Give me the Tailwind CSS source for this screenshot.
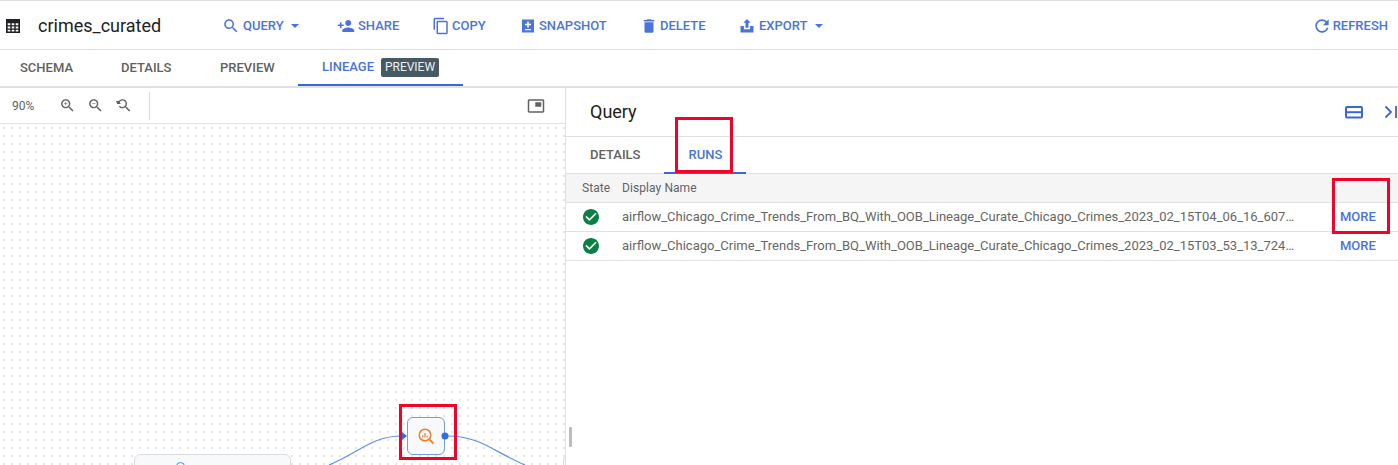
<!DOCTYPE html>
<html lang="en">
<head>
    <meta charset="UTF-8">
    <title>crimes_curated</title>
    <script src="https://cdn.jsdelivr.net/npm/@tailwindcss/browser@4"></script>
</head>
<body class="w-[1398px] h-[465px] overflow-hidden bg-white font-['Roboto',sans-serif] relative">
    <!-- title bar -->
    <div class="h-[50px] border-t border-b border-[#e0e0e0] pt-px flex items-center text-[13px] font-medium text-[#4a74dc] box-border">
        <svg class="w-[18px] h-[18px] ml-[4px] text-[#202124]" viewBox="0 0 18 18" fill="currentColor"><path fill-rule="evenodd" d="M2 2h14v14H2zM3.700 6.200v2h2.600v-2zm4 0v2h2.600v-2zm4 0v2h2.600v-2zM3.700 9.500v2h2.600v-2zm4 0v2h2.600v-2zm4 0v2h2.600v-2zM3.700 12.800v1.700h2.600v-1.700zm4 0v1.700h2.600v-1.700zm4 0v1.700h2.600v-1.700z"/></svg>
        <span class="ml-[16px] w-[184px] text-[18px] font-normal text-[#202124]">crimes_curated</span>
        <svg class="w-[18px] h-[18px] mr-[3px]" viewBox="0 0 24 24" fill="currentColor"><path d="M15.5 14h-.79l-.28-.27C15.41 12.59 16 11.11 16 9.5 16 5.91 13.09 3 9.5 3S3 5.91 3 9.5 5.91 16 9.5 16c1.61 0 3.09-.59 4.23-1.57l.27.28v.79l5 4.99L20.49 19l-4.99-5zm-6 0C7.01 14 5 11.99 5 9.5S7.01 5 9.5 5 14 7.01 14 9.500 11.990 14 9.500 14z"/></svg>
        <span class="w-[46px]">QUERY</span>
        <span class="ml-[2px] w-0 h-0 border-x-[4px] border-x-transparent border-t-[4px] border-t-[#4a74dc]"></span>
        <svg class="w-[20px] h-[18px] ml-[37px] mr-[2px]" viewBox="0 0 24 24" fill="currentColor"><path d="M15 12c2.210 0 4-1.790 4-4s-1.790-4-4-4-4 1.790-4 4 1.790 4 4 4zm-9-2V7H4v3H1v2h3v3h2v-3h3v-2H6zm9 4c-2.670 0-8 1.340-8 4v2h16v-2c0-2.660-5.330-4-8-4z"/></svg>
        <span class="w-[40px]">SHARE</span>
        <svg class="w-[18px] h-[18px] ml-[34px] mr-[2px]" viewBox="0 0 24 24" fill="currentColor"><path d="M16 1H4c-1.100 0-2 .9-2 2v14h2V3h12V1zm3 4H8c-1.100 0-2 .9-2 2v14c0 1.100.9 2 2 2h11c1.100 0 2-.9 2-2V7c0-1.100-.9-2-2-2zm0 16H8V7h11v14z"/></svg>
        <span class="w-[34px]">COPY</span>
        <svg class="w-[16px] h-[16px] ml-[34px] mr-[3px]" viewBox="0 0 16 16" fill="currentColor"><path fill-rule="evenodd" d="M2 1.500h12v13H2zM7.200 3.500v2.200H5v1.500h2.200v2.200h1.600V7.200H11V5.700H8.800V3.500zM5 11v1.300h6V11z"/></svg>
        <span class="w-[67px]">SNAPSHOT</span>
        <svg class="w-[18px] h-[18px] ml-[34px] mr-[2px]" viewBox="0 0 24 24" fill="currentColor"><path d="M6 19c0 1.100.9 2 2 2h8c1.100 0 2-.9 2-2V7H6v12zM19 4h-3.500l-1-1h-5l-1 1H5v2h14V4z"/></svg>
        <span class="w-[45px]">DELETE</span>
        <svg class="w-[16px] h-[16px] ml-[34px] mr-[4px]" viewBox="0 0 16 16" fill="currentColor"><path d="M8 1 4.300 4.800h2.200v5h3v-5h2.200zM1.500 8h3.400v3.300h6.200V8h3.400v6.500h-13z"/></svg>
        <span class="w-[47px]">EXPORT</span>
        <span class="ml-[9px] w-0 h-0 border-x-[4px] border-x-transparent border-t-[4px] border-t-[#4a74dc]"></span>
        <svg class="w-[20px] h-[20px] ml-auto mr-[1px]" viewBox="0 0 24 24" fill="currentColor"><path d="M17.650 6.350C16.200 4.900 14.210 4 12 4c-4.420 0-7.990 3.580-7.990 8s3.570 8 7.990 8c3.730 0 6.840-2.550 7.730-6h-2.080c-.82 2.330-3.040 4-5.650 4-3.310 0-6-2.690-6-6s2.690-6 6-6c1.660 0 3.140.69 4.220 1.780L13 11h7V4l-2.350 2.350z"/></svg>
        <span class="mr-[10px]">REFRESH</span>
    </div>

    <!-- tabs -->
    <div class="h-[38px] border-b-2 border-[#e0e0e0] flex text-[13px] font-medium text-[#616161] box-border">
        <div class="ml-[20px] w-[101px] flex items-center h-[36px]">SCHEMA</div>
        <div class="w-[99px] flex items-center h-[36px]">DETAILS</div>
        <div class="w-[78px] flex items-center h-[36px]">PREVIEW</div>
        <div class="px-[24px] flex items-center h-[36px] border-b-2 border-[#3b67d6] text-[#4a74dc]">
            <span class="w-[52px]">LINEAGE</span>
            <span class="ml-[7px] w-[58px] h-[19px] rounded-[2px] bg-[#455a64] text-white/90 text-[12px] font-normal flex items-center justify-center">PREVIEW</span>
        </div>
    </div>

    <div class="flex h-[377px]">
        <!-- lineage graph -->
        <div class="w-[566px] shrink-0 border-r border-[#e0e0e0] flex flex-col">
            <div class="h-[36px] shrink-0 border-b border-[#e0e0e0] flex items-center text-[#616161] box-border">
                <span class="ml-[12px] w-[47px] text-[12px]">90%</span>
                <svg class="w-[17px] h-[17px]" viewBox="0 0 24 24" fill="currentColor"><path d="M15.500 14h-.79l-.28-.27C15.410 12.590 16 11.110 16 9.500 16 5.910 13.090 3 9.500 3S3 5.910 3 9.500 5.910 16 9.500 16c1.610 0 3.090-.59 4.230-1.570l.27.28v.79l5 4.990L20.490 19l-4.990-5zm-6 0C7.010 14 5 11.990 5 9.500S7.010 5 9.500 5 14 7.010 14 9.500 11.990 14 9.500 14zM12 10h-2v2H9v-2H7V9h2V7h1v2h2v1z"/></svg>
                <svg class="w-[17px] h-[17px] ml-[11px]" viewBox="0 0 24 24" fill="currentColor"><path d="M15.500 14h-.79l-.28-.27C15.410 12.590 16 11.110 16 9.500 16 5.910 13.090 3 9.500 3S3 5.910 3 9.500 5.910 16 9.500 16c1.610 0 3.090-.59 4.230-1.570l.27.28v.79l5 4.990L20.490 19l-4.990-5zm-6 0C7.010 14 5 11.990 5 9.500S7.010 5 9.500 5 14 7.010 14 9.500 11.990 14 9.500 14zM7 9h5v1H7z"/></svg>
                <svg class="w-[17px] h-[17px] ml-[11px]" viewBox="0 0 24 24" fill="currentColor"><path d="M16.500 14h-.79l-.28-.27C16.410 12.590 17 11.110 17 9.500 17 5.910 14.090 3 10.500 3 8.300 3 6.400 4.100 5.200 5.700L1.500 5.500l1.500 4.500h5L6.700 7.200C7.500 5.900 8.900 5 10.500 5 12.990 5 15 7.010 15 9.500S12.990 14 10.500 14c-1.500 0-2.800-.7-3.600-1.800l-1.500 1.100C6.600 15 8.400 16 10.500 16c1.610 0 3.090-.59 4.230-1.570l.27.28v.79l5 4.990L21.490 19l-4.990-5z"/></svg>
                <div class="ml-[17px] w-px h-[28px] bg-[#dadce0]"></div>
                <svg class="w-[18px] h-[18px] ml-auto mr-[20px]" viewBox="0 0 24 24" fill="currentColor"><path d="M19 7h-8v6h8V7zm2-4H3c-1.100 0-2 .9-2 2v14c0 1.100.9 1.980 2 1.980h18c1.100 0 2-.88 2-1.980V5c0-1.100-.9-2-2-2zm0 16.010H3V4.980h18v14.030z"/></svg>
            </div>
            <div class="relative flex-1 overflow-hidden bg-[radial-gradient(#e6e6e6_0.8px,transparent_1px)] bg-[length:8px_8px]">
                <div class="absolute left-[407px] top-[293px] w-[38px] h-[38px] rounded-[6px] border border-[#6f9be8] bg-[#f8f9fa] flex items-center justify-center">
                    <svg class="w-[18px] h-[18px]" viewBox="0 0 18 18" fill="none" stroke="#f27a2b"><circle cx="8" cy="8" r="5.800" stroke-width="1.500"/><path d="M12.300 12.300 16.500 16.500" stroke-width="1.800"/><path d="M5.800 8v2.500M8 6v4.500M10.200 8.800v1.700" stroke-width="1.200"/></svg>
                </div>
                <svg class="absolute left-0 top-0 w-[565px] h-[341px]" viewBox="0 0 565 341" fill="none">
                    <path d="M329 341C360 328 372 312 402 312" stroke="#5b8fe8" stroke-width="1.200"/>
                    <path d="M448 312C480 312 494 328 525 341" stroke="#5b8fe8" stroke-width="1.200"/>
                    <path d="M402 308l5 4-5 4z" fill="#2f6fde"/>
                    <circle cx="445" cy="312" r="3.500" fill="#2f6fde"/>
                </svg>
                <div class="absolute left-[134px] top-[330px] w-[157px] h-[40px] rounded-[6px] border border-[#dadce0] bg-[#f8f9fa]">
                    <div class="mt-[7px] ml-[41px] w-[9px] h-[9px] rounded-full border-[1.500px] border-[#4a86e8]"></div>
                </div>
                <div class="absolute left-[563px] top-[331px] w-[10px] h-[40px] rounded-[6px] border border-[#dadce0] bg-[#f8f9fa]"></div>
            </div>
        </div>

        <!-- details panel -->
        <div class="relative flex-1 min-w-0 flex flex-col">
            <div class="h-[49px] shrink-0 border-b border-[#e0e0e0] flex items-center box-border overflow-hidden">
                <span class="ml-[24px] mb-[2px] text-[18px] text-[#202124]">Query</span>
                <svg class="w-[20px] h-[20px] ml-auto text-[#3b67d6]" viewBox="0 0 20 20" fill="none" stroke="currentColor" stroke-width="2"><rect x="2" y="5" width="16" height="10.500" rx="1"/><path d="M2 10.200h16"/></svg>
                <svg class="w-[14px] h-[14px] ml-[20px] shrink-0 text-[#3b67d6]" viewBox="0 0 14 14" fill="none" stroke="currentColor" stroke-width="1.800"><path d="M1.500 1.500 7 7l-5.500 5.500M12 1v12"/></svg>
            </div>
            <div class="h-[37px] shrink-0 border-b border-[#e0e0e0] flex text-[13px] font-medium text-[#616161] box-border">
                <div class="px-[24px] flex items-center">DETAILS</div>
                <div class="px-[24px] flex items-center h-[37px] border-b-2 border-[#3b67d6] text-[#4a74dc]">RUNS</div>
            </div>
            <div class="h-[29px] shrink-0 bg-[#f5f5f5] border-b border-[#e0e0e0] flex items-center text-[12px] font-normal text-[#5f6368] tracking-[0.08px] box-border">
                <span class="ml-[16px] w-[40px]">State</span>
                <span>Display Name</span>
            </div>
            <div class="h-[29px] shrink-0 border-b border-[#e0e0e0] flex items-center text-[13px] text-[#666666] box-border">
                <svg class="w-[16px] h-[16px] ml-[17px] text-[#0b8043]" viewBox="2 2 20 20" fill="currentColor"><path d="M12 2C6.480 2 2 6.480 2 12s4.480 10 10 10 10-4.480 10-10S17.520 2 12 2zm-2 15l-5-5 1.410-1.410L10 14.170l7.590-7.590L19 8l-9 9z"/></svg>
                <span class="ml-[23px] w-[673px] whitespace-nowrap">airflow_Chicago_Crime_Trends_From_BQ_With_OOB_Lineage_Curate_Chicago_Crimes_2023_02_15T04_06_16_607…</span>
                <span class="ml-[45px] font-medium text-[#4a74dc]">MORE</span>
            </div>
            <div class="h-[29px] shrink-0 border-b border-[#e0e0e0] flex items-center text-[13px] text-[#666666] box-border">
                <svg class="w-[16px] h-[16px] ml-[17px] text-[#0b8043]" viewBox="2 2 20 20" fill="currentColor"><path d="M12 2C6.480 2 2 6.480 2 12s4.480 10 10 10 10-4.480 10-10S17.520 2 12 2zm-2 15l-5-5 1.410-1.410L10 14.170l7.590-7.590L19 8l-9 9z"/></svg>
                <span class="ml-[23px] w-[673px] whitespace-nowrap">airflow_Chicago_Crime_Trends_From_BQ_With_OOB_Lineage_Curate_Chicago_Crimes_2023_02_15T03_53_13_724…</span>
                <span class="ml-[45px] font-medium text-[#4a74dc]">MORE</span>
            </div>
            <div class="absolute left-[3px] top-[339px] w-[3px] h-[20px] rounded-[1px] bg-[#bdbdbd]"></div>
        </div>
    </div>

    <!-- red annotation boxes drawn over the screenshot -->
    <div class="absolute left-[675px] top-[117px] w-[58px] h-[56px] border-[3px] border-[#f40028]"></div>
    <div class="absolute left-[1332px] top-[178px] w-[58px] h-[56px] border-[3px] border-[#f40028]"></div>
    <div class="absolute left-[399px] top-[404px] w-[58px] h-[56px] border-[3px] border-[#f40028]"></div>
</body>
</html>
